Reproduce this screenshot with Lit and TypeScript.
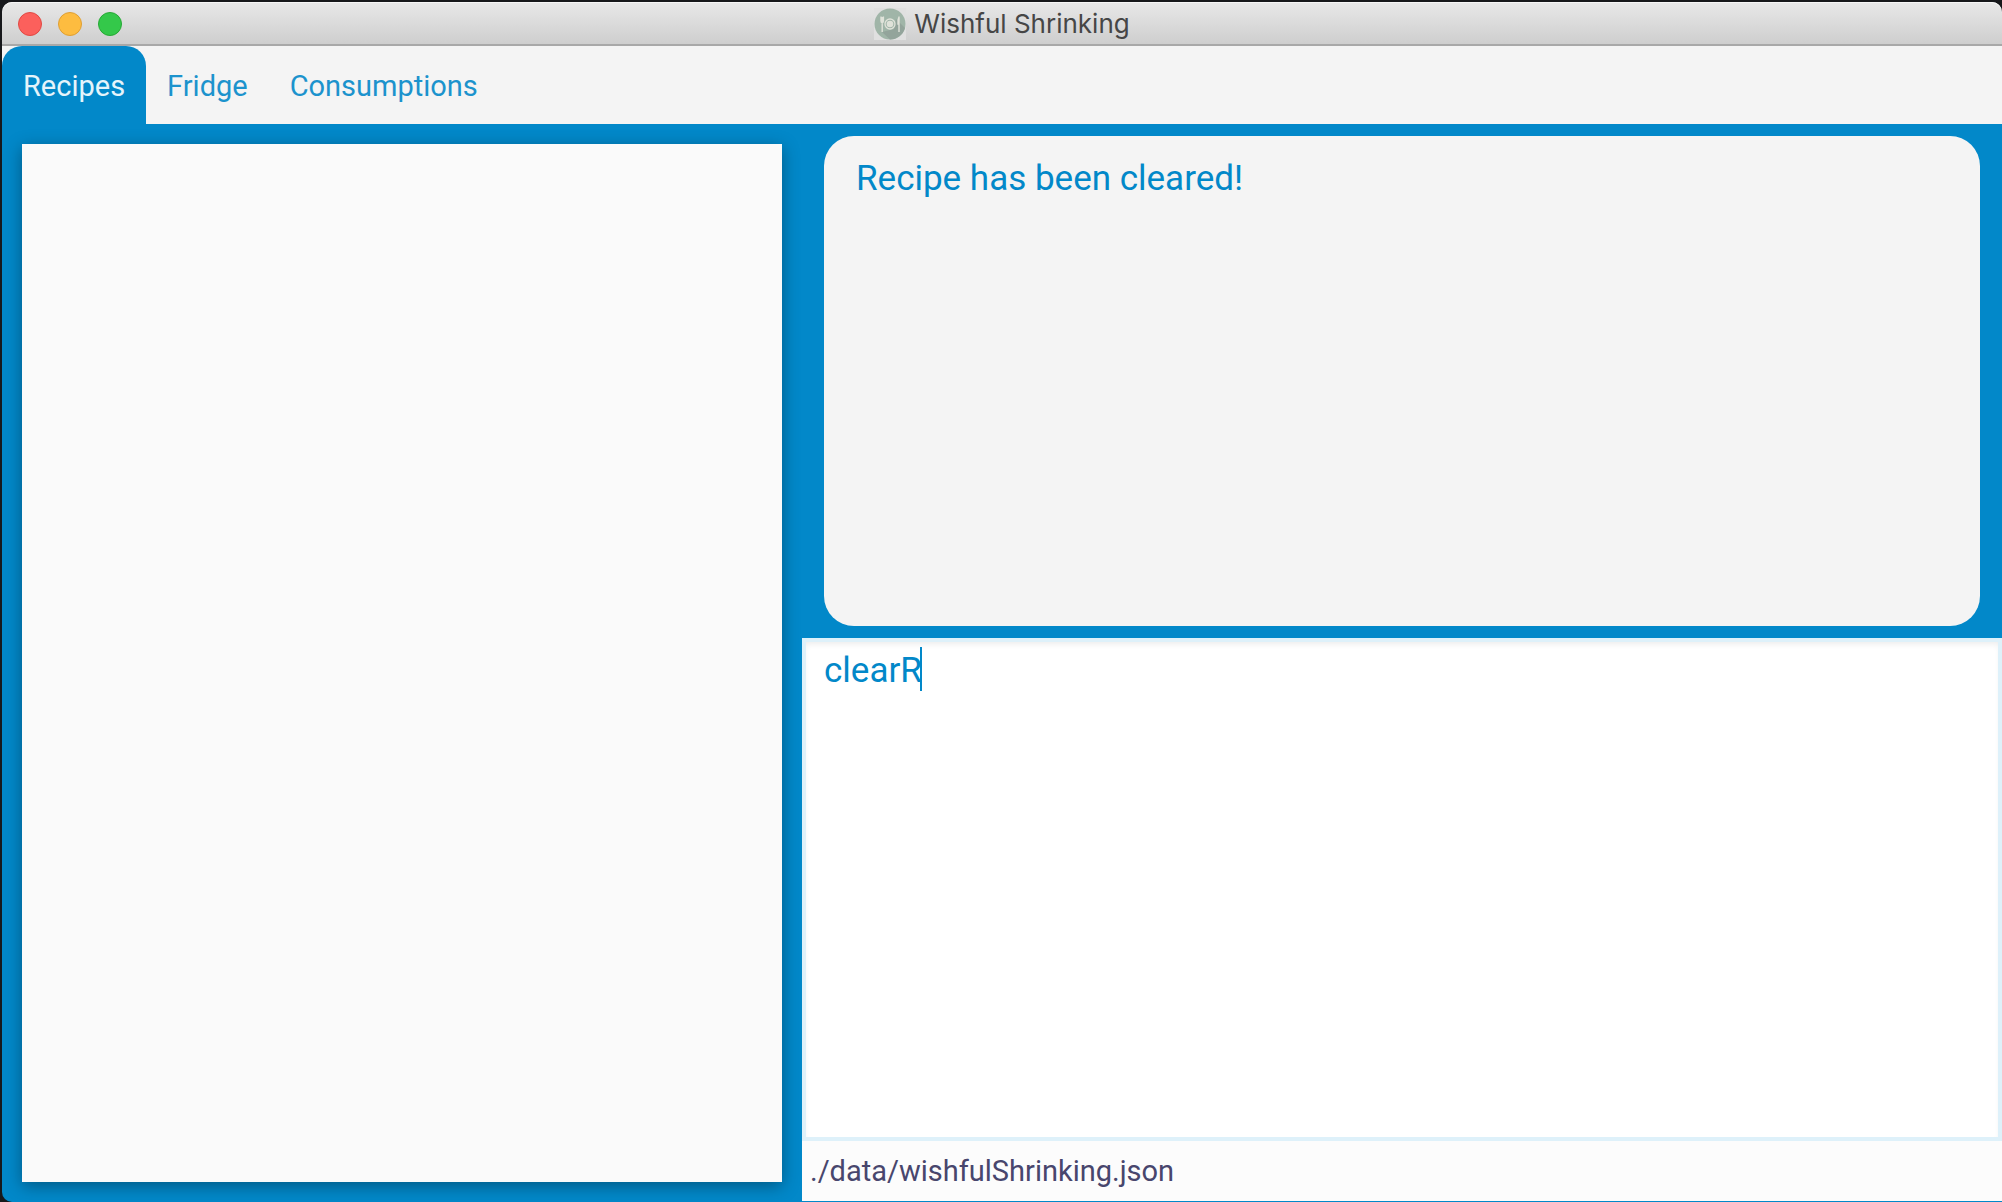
import { LitElement, html, css, svg } from "lit";
import { customElement, property, state } from "lit/decorators.js";

const plateIcon = svg`
  <svg class="logo" viewBox="0 0 32 32" aria-hidden="true">
    <rect width="32" height="32" fill="#e0e0e0" />
    <circle cx="16" cy="16" r="15.5" fill="#a0b5a8" />
    <path d="M22 11 L31 20 A15.5 15.5 0 0 1 16 31.5 L8 24 L20 21 Z" fill="#93a49b" />
    <circle cx="16" cy="16" r="5" fill="none" stroke="#e0e3da" stroke-width="1.3" />
    <circle cx="16" cy="16" r="3.3" fill="#dfe2d9" />
    <path d="M7 8.500v4.500q0 1.500 1.200 1.500T9.400 13V8.500M8.200 9V24M25 8.500V24M25 9q-1.500 3-1 7h1" fill="none" stroke="#e0e3da" stroke-width="1.400" />
  </svg>`;

@customElement("title-bar")
export class TitleBar extends LitElement {
  @property() heading = "";

  static styles = css`
    :host {
      display: grid;
      grid-template-columns: 1fr auto 1fr;
      align-items: center;
      height: 44px;
      box-sizing: border-box;
      padding: 2px 16px 0;
      background: linear-gradient(#e8e8e8, #cecece);
      border-bottom: 2px solid #a8a8a8;
      border-radius: 10px 10px 0 0;
      box-shadow: inset 0 1px 0 #f6f6f6;
    }
    .lights {
      display: flex;
      gap: 16px;
    }
    .light {
      width: 24px;
      height: 24px;
      padding: 0;
      border-radius: 50%;
      border: 1px solid;
    }
    .close {
      background: #fc605c;
      border-color: #e14943;
    }
    .minimise {
      background: #fdbc40;
      border-color: #df9f33;
    }
    .zoom {
      background: #34c84a;
      border-color: #27a935;
    }
    .heading {
      display: flex;
      align-items: center;
      gap: 8px;
      margin: 0;
      font: 400 26px/32px Inter, sans-serif;
      color: #464646;
    }
    .logo {
      width: 32px;
      height: 32px;
    }
  `;

  render() {
    return html`
      <div class="lights">
        <button class="light close" aria-label="Close"></button>
        <button class="light minimise" aria-label="Minimise"></button>
        <button class="light zoom" aria-label="Zoom"></button>
      </div>
      <h1 class="heading">${plateIcon}<span>${this.heading}</span></h1>
    `;
  }
}

@customElement("app-root")
export class AppRoot extends LitElement {
  @state() private tab = "Recipes";
  private tabs = ["Recipes", "Fridge", "Consumptions"];

  static styles = css`
    :host {
      display: block;
      font-family: Roboto, sans-serif;
      background: #17181b;
    }
    .window {
      display: flex;
      flex-direction: column;
      min-height: 100vh;
      box-sizing: border-box;
      padding: 2px 0 0 2px;
    }
    .tabs {
      display: flex;
      background: #f4f4f4;
    }
    .tab {
      border: 0;
      padding: 21px 21px 19px;
      background: none;
      font: 400 29px/38px Roboto, sans-serif;
      color: #1c93cd;
    }
    .tab.active {
      background: #0288c9;
      color: #e5f4fb;
      border-radius: 20px 20px 0 0;
    }
    .body {
      flex: 1;
      display: grid;
      grid-template-columns: 2fr 3fr;
      background: #0288c9;
      border-bottom-left-radius: 10px;
    }
    .list {
      margin: 20px;
      background: #fafafa;
      box-shadow: 0 4px 16px rgba(0, 0, 0, 0.35);
    }
    .side {
      display: grid;
      grid-template-rows: 514fr 503fr auto;
      padding-bottom: 1px;
    }
    .reply {
      display: block;
      margin: 12px 22px;
      padding: 21px 32px;
      border-radius: 30px;
      background: #f4f4f4;
      color: #0288c9;
      font-size: 35px;
      line-height: 44px;
    }
    .entry {
      display: flex;
      position: relative;
    }
    .command {
      flex: 1;
      box-sizing: border-box;
      border: 4px solid #def1fa;
      padding: 7px 18px;
      resize: none;
      outline: 0;
      background: #fff;
      box-shadow: inset 0 4px 6px -2px rgba(0, 0, 0, 0.08);
      color: #0288c9;
      font: 400 35px/44px Roboto, sans-serif;
    }
    .caret {
      position: absolute;
      left: 118px;
      top: 9px;
      width: 2px;
      height: 44px;
      background: #0288c9;
    }
    .status {
      padding: 11px 8px;
      background: #fcfcfc;
      color: #48466d;
      font-size: 29px;
      line-height: 38px;
    }
  `;

  render() {
    return html`
      <div class="window">
        <title-bar heading="Wishful Shrinking"></title-bar>
        <nav class="tabs" role="tablist">
          ${this.tabs.map(
            (name) => html`<button
              class="tab ${name === this.tab ? "active" : ""}"
              role="tab"
              aria-selected=${name === this.tab}
              @click=${() => (this.tab = name)}
            >${name}</button>`
          )}
        </nav>
        <main class="body">
          <section class="list" aria-label=${this.tab}></section>
          <div class="side">
            <output class="reply">Recipe has been cleared!</output>
            <div class="entry">
              <textarea class="command" aria-label="Command" spellcheck="false" .value=${"clearR"}></textarea>
              <span class="caret"></span>
            </div>
            <footer class="status">./data/wishfulShrinking.json</footer>
          </div>
        </main>
      </div>
    `;
  }
}
